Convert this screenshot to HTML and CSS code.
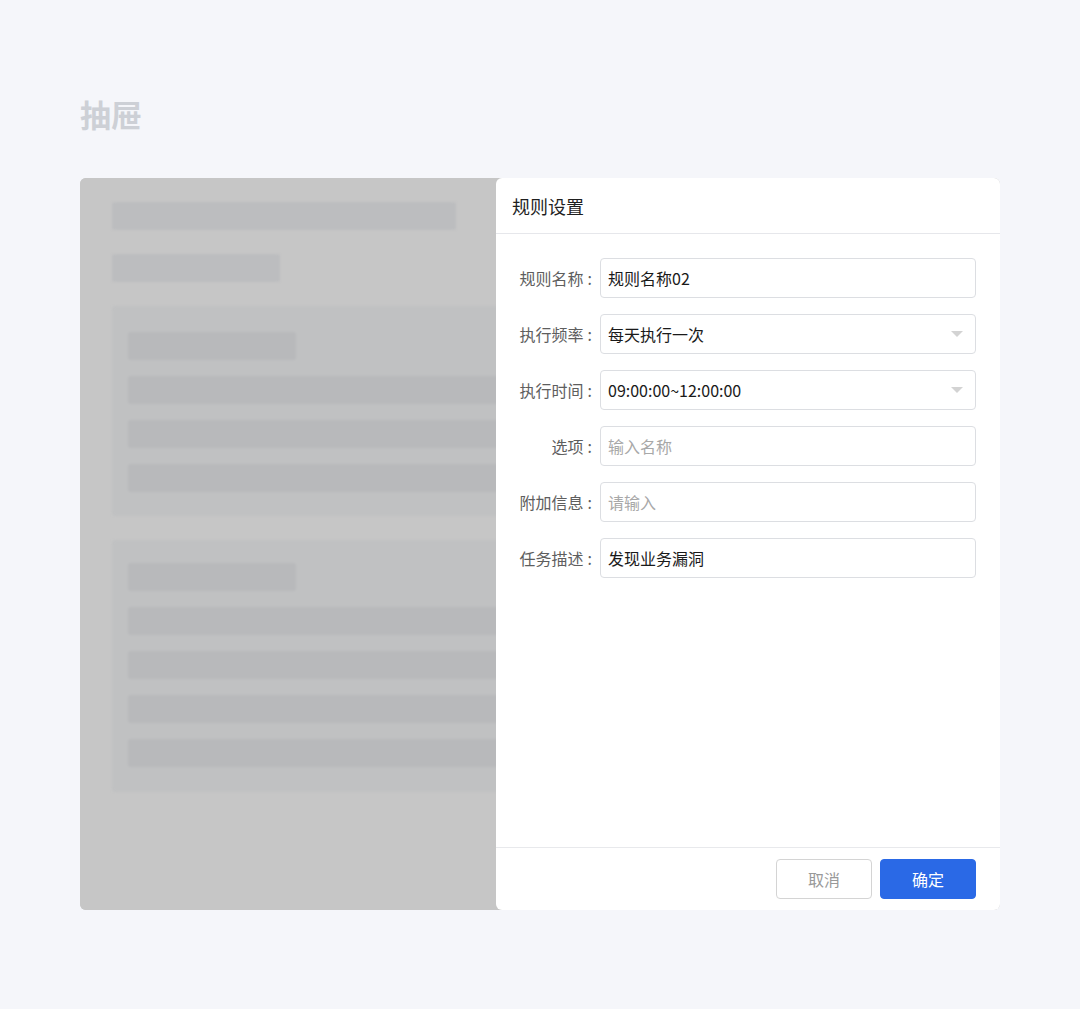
FILE: index.html
```html
<!DOCTYPE html>
<html lang="zh-CN">
<head>
<meta charset="utf-8">
<title>抽屉</title>
<link rel="stylesheet" href="styles.css">
</head>
<body>
<div class="page">
  <h1 class="title">抽屉</h1>
  <div class="frame">
    <div class="backdrop">
      <div class="skeleton">
        <div class="sk sk-wide"></div>
        <div class="sk sk-short"></div>
        <div class="sk-card card-a">
          <div class="bar bar-head"></div>
          <div class="bar"></div>
          <div class="bar"></div>
          <div class="bar"></div>
        </div>
        <div class="sk-card card-b">
          <div class="bar bar-head"></div>
          <div class="bar"></div>
          <div class="bar"></div>
          <div class="bar"></div>
          <div class="bar"></div>
        </div>
      </div>
    </div>
    <div class="drawer">
      <div class="drawer-header">规则设置</div>
      <div class="drawer-body">
        <div class="row">
          <label class="label">规则名称<span class="colon">:</span></label>
          <div class="field">规则名称02</div>
        </div>
        <div class="row">
          <label class="label">执行频率<span class="colon">:</span></label>
          <div class="field select">每天执行一次<span class="caret"></span></div>
        </div>
        <div class="row">
          <label class="label">执行时间<span class="colon">:</span></label>
          <div class="field select">09:00:00~12:00:00<span class="caret"></span></div>
        </div>
        <div class="row">
          <label class="label">选项<span class="colon">:</span></label>
          <div class="field placeholder">输入名称</div>
        </div>
        <div class="row">
          <label class="label">附加信息<span class="colon">:</span></label>
          <div class="field placeholder">请输入</div>
        </div>
        <div class="row">
          <label class="label">任务描述<span class="colon">:</span></label>
          <div class="field">发现业务漏洞</div>
        </div>
      </div>
      <div class="drawer-footer">
        <button class="btn btn-cancel">取消</button>
        <button class="btn btn-primary">确定</button>
      </div>
    </div>
  </div>
</div>
</body>
</html>
```
FILE: styles.css
```css
* { box-sizing: border-box; }
html, body {
  margin: 0;
  padding: 0;
  background: #f5f6fa;
  font-family: "Noto Sans CJK SC", "Noto Sans", "Liberation Sans", sans-serif;
}
.page {
  padding: 94px 80px 0 80px;
}
.title {
  margin: 0;
  height: 40px;
  line-height: 40px;
  font-size: 31px;
  font-weight: 600;
  color: #cdd0d6;
}
.frame {
  margin-top: 44px;
  width: 920px;
  height: 732px;
  display: flex;
  background: #c6c6c6;
  border-radius: 6px;
}
.backdrop {
  flex: 1;
  overflow: hidden;
  border-radius: 6px 0 0 6px;
  background: #c6c6c6;
}
.skeleton {
  padding: 24px 0 0 32px;
  display: flex;
  flex-direction: column;
  gap: 24px;
  filter: blur(1.2px);
}
.sk {
  height: 28px;
  background: #bcbdbf;
  border-radius: 3px;
}
.sk-wide { width: 344px; }
.sk-short { width: 168px; }
.sk-card {
  width: 600px;
  background: #c0c1c2;
  border-radius: 4px;
  padding: 26px 16px 24px 16px;
  display: flex;
  flex-direction: column;
  gap: 16px;
}
.card-b { padding: 23px 16px 25px 16px; }
.bar {
  height: 28px;
  background: #b8b9bb;
  border-radius: 3px;
}
.bar-head { width: 168px; }

.drawer {
  width: 504px;
  background: #ffffff;
  border-radius: 6px;
  display: flex;
  flex-direction: column;
}
.drawer-header {
  height: 56px;
  border-bottom: 1px solid #e6e7eb;
  padding-left: 16px;
  display: flex;
  align-items: center;
  font-size: 18px;
  color: #1f1f1f;
}
.drawer-body {
  flex: 1;
  padding: 24px 24px 0 0;
  display: flex;
  flex-direction: column;
  gap: 16px;
}
.row {
  display: flex;
  align-items: center;
  gap: 8px;
}
.label {
  width: 96px;
  text-align: right;
  font-size: 16px;
  color: #5e5e5e;
}
.colon {
  margin-left: 4px;
}
.field {
  flex: 1;
  height: 40px;
  border: 1px solid #dcdee2;
  border-radius: 4px;
  padding: 0 12px 0 7px;
  display: flex;
  align-items: center;
  justify-content: space-between;
  font-size: 16px;
  color: #1a1a1a;
}
.field.placeholder { color: #a8a8a8; }
.caret {
  width: 0;
  height: 0;
  border-left: 6px solid transparent;
  border-right: 6px solid transparent;
  border-top: 6px solid #d3d3d3;
}
.drawer-footer {
  height: 63px;
  border-top: 1px solid #e8e9ec;
  display: flex;
  align-items: center;
  justify-content: flex-end;
  gap: 8px;
  padding-right: 24px;
}
.btn {
  width: 96px;
  height: 40px;
  border-radius: 4px;
  font-family: inherit;
  font-size: 16px;
  cursor: pointer;
}
.btn-cancel {
  background: #ffffff;
  border: 1px solid #d4d4d4;
  color: #999;
}
.btn-primary {
  background: #2a69e6;
  border: 1px solid #2a69e6;
  color: #ffffff;
}
```
